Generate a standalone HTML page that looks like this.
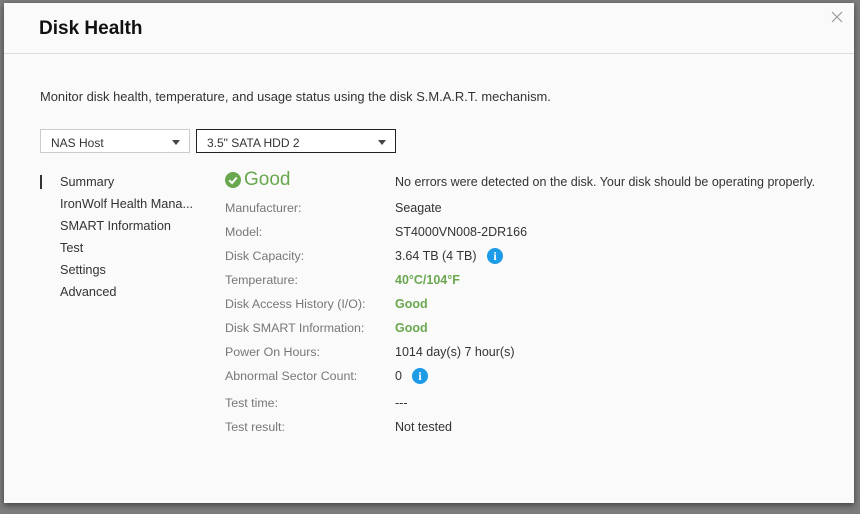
<!DOCTYPE html>
<html><head><meta charset="utf-8"><style>
html,body{margin:0;padding:0;width:860px;height:514px;overflow:hidden;background:#7d7d7d;font-family:"Liberation Sans",sans-serif;}
.dlg{position:absolute;left:4px;top:3px;width:850px;height:500px;background:#fafafa;box-shadow:0 2px 6px rgba(0,0,0,.5);}
.t{position:absolute;left:35px;top:15px;font-size:19px;font-weight:bold;color:#111;}
.hr{position:absolute;left:0;right:0;top:50px;height:1px;background:#dcdcdc;}
.x{position:absolute;left:827px;top:8px;}
.desc{position:absolute;left:36px;top:86px;font-size:12.9px;color:#333;}
.sel{position:absolute;top:126px;height:24px;box-sizing:border-box;font-size:12px;color:#333;padding:6px 0 0 10px;}
.sel .a{position:absolute;right:9px;top:10px;width:0;height:0;border-left:4px solid transparent;border-right:4px solid transparent;border-top:5px solid #444;}
.nav{position:absolute;left:56px;font-size:12.7px;color:#333;}
.bar{position:absolute;left:36px;top:172px;width:2px;height:14px;background:#333;}
.l{position:absolute;left:221px;font-size:12.4px;color:#777;}
.v{position:absolute;left:391px;font-size:12.5px;color:#333;}
.g{color:#6aa84f;font-weight:bold;}
.i{position:absolute;width:16px;height:16px;border-radius:50%;background:#1e9be6;color:#fff;font-size:12px;font-weight:bold;text-align:center;line-height:16px;font-family:"Liberation Serif",serif;}
</style></head><body>
<div class="dlg">
<div class="t">Disk Health</div>
<svg class="x" width="12" height="12"><path d="M1 1L11 11M11 1L1 11" stroke="#999" stroke-width="1.2"/></svg>
<div class="hr"></div>
<div class="desc">Monitor disk health, temperature, and usage status using the disk S.M.A.R.T. mechanism.</div>
<div class="sel" style="left:36px;width:150px;border:1px solid #ccc;background:#fff;">NAS Host<span class="a"></span></div>
<div class="sel" style="left:192px;width:200px;border:1px solid #222;background:#fff;">3.5" SATA HDD 2<span class="a"></span></div>
<div class="bar"></div>
<div class="nav" style="top:172px">Summary</div>
<div class="nav" style="top:194px">IronWolf Health Mana...</div>
<div class="nav" style="top:216px">SMART Information</div>
<div class="nav" style="top:238px">Test</div>
<div class="nav" style="top:260px">Settings</div>
<div class="nav" style="top:282px">Advanced</div>
<svg style="position:absolute;left:221px;top:169px" width="16" height="16"><circle cx="8" cy="8" r="8" fill="#6aa84f"/><path d="M4.2 8.3L7 11L11.8 5.5" stroke="#fff" stroke-width="2" fill="none"/></svg>
<div style="position:absolute;left:240px;top:166px;font-size:19px;color:#6aa84f;">Good</div>
<div class="v" style="top:172px">No errors were detected on the disk. Your disk should be operating properly.</div>
<div class="l" style="top:198px">Manufacturer:</div><div class="v" style="top:198px">Seagate</div>
<div class="l" style="top:222px">Model:</div><div class="v" style="top:222px">ST4000VN008-2DR166</div>
<div class="l" style="top:246px">Disk Capacity:</div><div class="v" style="top:246px">3.64 TB (4 TB)</div><div class="i" style="left:483px;top:245px">i</div>
<div class="l" style="top:270px">Temperature:</div><div class="v g" style="top:270px">40°C/104°F</div>
<div class="l" style="top:294px">Disk Access History (I/O):</div><div class="v g" style="top:294px">Good</div>
<div class="l" style="top:318px">Disk SMART Information:</div><div class="v g" style="top:318px">Good</div>
<div class="l" style="top:342px">Power On Hours:</div><div class="v" style="top:342px">1014 day(s) 7 hour(s)</div>
<div class="l" style="top:366px">Abnormal Sector Count:</div><div class="v" style="top:366px">0</div><div class="i" style="left:408px;top:365px">i</div>
<div class="l" style="top:393px">Test time:</div><div class="v" style="top:393px">---</div>
<div class="l" style="top:417px">Test result:</div><div class="v" style="top:417px">Not tested</div>
</div>
</body></html>
